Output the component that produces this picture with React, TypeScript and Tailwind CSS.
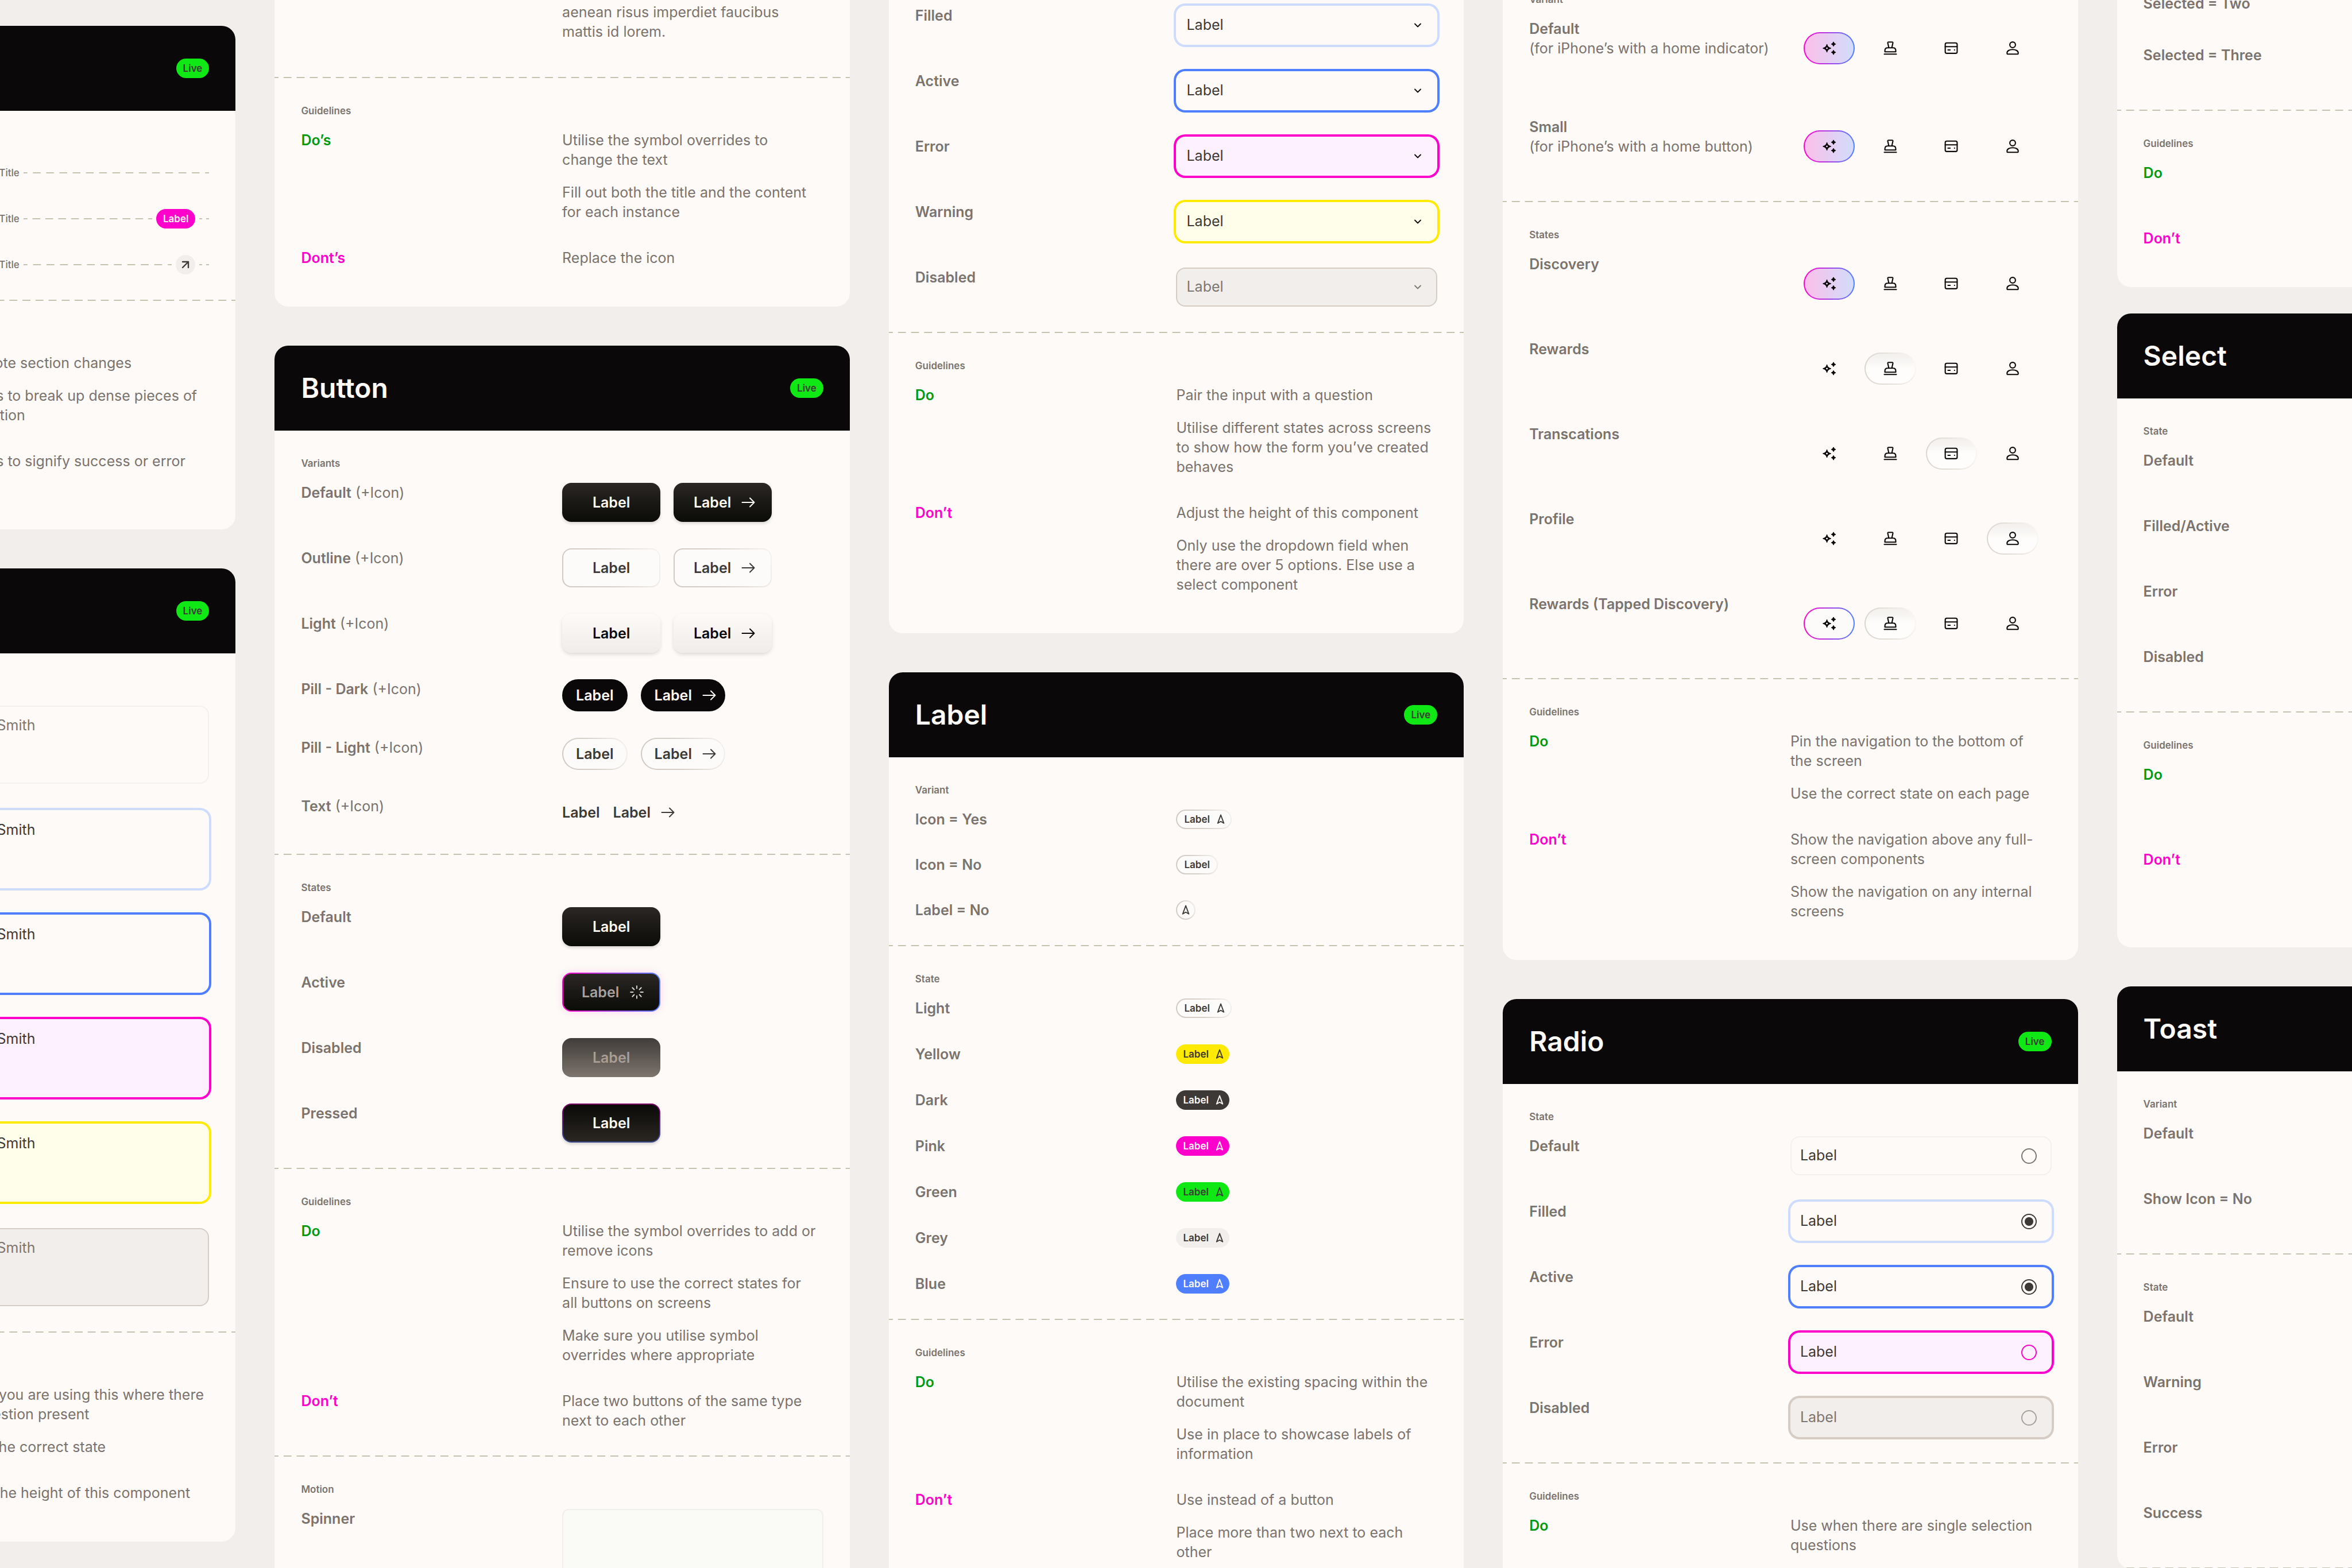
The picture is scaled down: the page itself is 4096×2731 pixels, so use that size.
import React from "react";
import { ArrowUpRight, ChevronDown, Loader, Navigation2 } from "lucide-react";

type Tone = "light" | "yellow" | "dark" | "pink" | "green" | "grey" | "blue";
type FieldState = "default" | "filled" | "active" | "error" | "warning" | "disabled" | "locked";

const outlineBorder =
  "border-2 border-transparent [background:linear-gradient(#fdfbf9,#fdfbf9)_padding-box,linear-gradient(70deg,#cfc9c1_0%,#d6d0c9_45%,#f6f3f0_100%)_border-box]";

const tones: Record<Tone, string> = {
  light: `text-[#3d3936] ${outlineBorder}`,
  yellow: "bg-[#ffea00] text-[#3d3936]",
  dark: "bg-[#3d3936] text-[#fdfaf7]",
  pink: "bg-[#ff00cc] text-[#fdfaf7]",
  green: "bg-[#10e815] text-[#3d3936]",
  grey: "bg-[#f1eeeb] text-[#3d3936]",
  blue: "bg-[#4f7fff] text-[#fdfaf7]",
};

const fields: Record<FieldState, string> = {
  default: "border-2 border-[#f3f0ed] text-[#3d3936]",
  filled: "border-2 border-transparent ring-4 ring-[#cddbff] text-[#3d3936]",
  active: "border-2 border-transparent ring-4 ring-[#4f7fff] text-[#3d3936]",
  error: "border-2 border-transparent bg-[#fef1ff] ring-4 ring-[#ff00cc] text-[#3d3936]",
  warning: "border-2 border-transparent bg-[#fffeea] ring-4 ring-[#ffea00] text-[#3d3936]",
  disabled: "border-2 border-[#d6ccc4] bg-[#f1eeeb] text-[#7e7670]",
  locked: "border-2 border-transparent bg-[#f1eeeb] ring-4 ring-[#d6ccc4] text-[#7e7670]",
};

function Badge({ tone, text, icon }: { tone: Tone; text?: string; icon?: boolean }) {
  return (
    <span
      className={`flex h-[34px] w-fit min-w-[34px] shrink-0 items-center justify-center gap-[10px] rounded-full text-[17px] leading-none font-semibold ${
        text ? (icon ? "pr-[8px] pl-[12px]" : "px-[12px]") : ""
      } ${tones[tone]}`}
    >
      {text}
      {icon && <Navigation2 size={18} strokeWidth={2.6} aria-hidden="true" />}
    </span>
  );
}

function Dashes({ className = "" }: { className?: string }) {
  return (
    <div
      className={`h-[2px] bg-[linear-gradient(90deg,#c6c2b0_31%,transparent_31%_69%,#c6c2b0_69%)] bg-[length:23px_2px] [background-repeat:round_no-repeat] ${className}`}
    />
  );
}

function Column({ className = "", children }: { className?: string; children: React.ReactNode }) {
  return <div className={`flex min-w-0 flex-col gap-[68px] ${className}`}>{children}</div>;
}

function Card({ title, className = "", children }: { title?: string; className?: string; children: React.ReactNode }) {
  return (
    <article className={`overflow-hidden rounded-3xl bg-[#fdfaf7] ${className}`}>
      {title && (
        <header className="flex h-[148px] items-center justify-between bg-[#0b0809] px-[46px]">
          <h2 className="text-[48px] leading-none font-semibold text-[#fdfaf7]">{title}</h2>
          <Badge tone="green" text="Live" />
        </header>
      )}
      {children}
    </article>
  );
}

function Section({
  label,
  last,
  gap = "gap-[46px]",
  pad = "pb-[44px]",
  children,
}: {
  label: string;
  last?: boolean;
  gap?: string;
  pad?: string;
  children: React.ReactNode;
}) {
  return (
    <section>
      <div className={`px-[46px] pt-[46px] ${last ? "pb-[68px]" : pad}`}>
        <h3 className="mb-[23px] text-[17px] leading-[22px] font-semibold">{label}</h3>
        <div className={`flex flex-col ${gap}`}>{children}</div>
      </div>
      {!last && <Dashes />}
    </section>
  );
}

function Row({
  name,
  note,
  height = "",
  children,
}: {
  name: React.ReactNode;
  note?: string;
  height?: string;
  children?: React.ReactNode;
}) {
  return (
    <div className={`grid grid-cols-2 items-start ${height}`}>
      <div className="leading-[34px] font-semibold whitespace-nowrap">
        {name}
        {note && <span className="font-normal">{note}</span>}
      </div>
      <div className="min-w-0">{children}</div>
    </div>
  );
}

function Advice({ kind, name, items }: { kind: "do" | "dont"; name: string; items: string[] }) {
  return (
    <Row name={<span className={kind === "do" ? "text-[#009a10]" : "text-[#ff00cc]"}>{name}</span>}>
      <div className="flex flex-col gap-[23px]">
        {items.map((text) => (
          <p key={text} className="leading-[34px] whitespace-pre">
            {text}
          </p>
        ))}
      </div>
    </Row>
  );
}

function Arrow() {
  return (
    <svg viewBox="0 0 24 18" className="h-[18px] w-[24px]" fill="none" stroke="currentColor" strokeWidth="2" strokeLinecap="round" strokeLinejoin="round" aria-hidden="true">
      <path d="M1.5 9H22.5M15 1.5 22.5 9 15 16.5" />
    </svg>
  );
}

const boxButton =
  "flex h-[68px] w-[171px] items-center justify-center gap-[18px] rounded-2xl leading-none font-semibold";
const pillButton = "flex h-14 items-center gap-[18px] rounded-full leading-none font-semibold";

const buttonLooks = {
  dark: `${boxButton} bg-linear-to-b from-[#2b2724] to-[#0b0b08] text-[#fdfaf7] shadow-[0_3px_5px_rgba(0,0,0,0.14)]`,
  outline: `${boxButton} ${outlineBorder} text-[#3d3936]`,
  light: `${boxButton} bg-linear-to-b from-[#fdfaf7] to-[#efecea] text-[#0b0809] shadow-[0_3px_6px_rgba(0,0,0,0.13)]`,
  pillDark: `${pillButton} border-2 border-[#0b0809] bg-[#0b0809] text-[#fdfaf7]`,
  pillLight: `${pillButton} ${outlineBorder} text-[#3d3936]`,
  text: "flex h-14 items-center gap-[18px] leading-none font-semibold text-[#3d3936]",
};

function ButtonPair({ look }: { look: keyof typeof buttonLooks }) {
  const pill = look === "pillDark" || look === "pillLight";
  const box = look === "dark" || look === "outline" || look === "light";
  return (
    <div className="flex gap-[23px]">
      <button type="button" className={`${buttonLooks[look]} ${pill ? "px-[22px]" : ""}`}>
        Label
      </button>
      <button type="button" className={`${buttonLooks[look]} ${pill ? "pr-[14px] pl-[22px]" : ""} ${box ? "pl-[6px]" : ""}`}>
        Label
        <Arrow />
      </button>
    </div>
  );
}

function Dropdown({ name, state }: { name: string; state: FieldState }) {
  return (
    <div className="relative">
      <select
        aria-label={name}
        disabled={state === "disabled"}
        className={`block h-[68px] w-full appearance-none rounded-2xl px-[16px] opacity-100 ${fields[state]}`}
      >
        <option>Label</option>
      </select>
      <ChevronDown
        size={20}
        strokeWidth={2.2}
        aria-hidden="true"
        className={`pointer-events-none absolute top-[24px] right-[24px] ${state === "disabled" ? "text-[#7e7670]" : "text-[#0b0809]"}`}
      />
    </div>
  );
}

function RadioField({ name, state, checked, ring }: { name: string; state: FieldState; checked?: boolean; ring: string }) {
  return (
    <label className={`flex h-[68px] items-center justify-between rounded-2xl pr-[24px] pl-[15px] ${fields[state]}`}>
      Label
      <input
        type="radio"
        name={`radio-${name}`}
        defaultChecked={checked}
        disabled={state === "locked"}
        className={`size-[27px] appearance-none rounded-full border-2 checked:bg-[radial-gradient(circle,#3d3936_7px,transparent_8px)] ${ring}`}
      />
    </label>
  );
}

function TextArea({ name, state, muted }: { name: string; state: FieldState; muted?: boolean }) {
  return (
    <textarea
      aria-label={name}
      defaultValue="Anna Smith"
      disabled={state === "disabled"}
      className={`block h-[136px] w-full resize-none rounded-2xl px-[15px] py-[15px] leading-[34px] ${fields[state]} ${muted ? "text-[#7e7670]!" : ""}`}
    />
  );
}

const icons = {
  Discovery: (
    <g fill="currentColor" strokeWidth="1.1">
      <path
        fillRule="evenodd"
        d="M8.2 6.3Q9.2 11 13.9 12Q9.2 13 8.2 17.7Q7.2 13 2.5 12Q7.2 11 8.2 6.3ZM8.2 10.1A1.9 1.9 0 1 0 8.2 13.9A1.9 1.9 0 1 0 8.2 10.1Z"
      />
      <path d="M18 2.8Q18.6 5.2 21 5.8Q18.6 6.4 18 8.8Q17.4 6.4 15 5.8Q17.4 5.2 18 2.8Z" />
      <path d="M18 15.2Q18.6 17.6 21 18.2Q18.6 18.8 18 21.2Q17.4 18.8 15 18.2Q17.4 17.6 18 15.2Z" />
    </g>
  ),
  Rewards: (
    <path d="M9.8 11.4 8.2 4.2Q8 2.8 9.3 2.8H14.7Q16 2.8 15.8 4.2L14.2 11.4M3.9 17.3V15.6Q3.9 11.4 8 11.4H16Q20.1 11.4 20.1 15.6V17.3ZM3 20.8H21" />
  ),
  Transactions: (
    <>
      <rect x="3.1" y="4.1" width="17.8" height="15.5" rx="2.3" />
      <path d="M3.1 9.6H20.9M7.2 14.6H10.4M16.9 14.6H17.1" />
    </>
  ),
  Profile: (
    <>
      <circle cx="12" cy="6.9" r="4.2" />
      <path d="M3.7 18.6C3.7 15.9 7.7 13.9 12 13.9S20.3 15.9 20.3 18.6V19.4C20.3 20.3 19.7 20.8 18.9 20.8H5.1C4.3 20.8 3.7 20.3 3.7 19.4Z" />
    </>
  ),
};

type TabName = keyof typeof icons;

const tabLooks = {
  none: "border-transparent",
  glow: "border-transparent [background:linear-gradient(90deg,#fabfe9,#d2dcfb)_padding-box,linear-gradient(90deg,#ff00cc,#4f7fff)_border-box]",
  ring: "border-transparent [background:linear-gradient(#fdfbf9,#fdfbf9)_padding-box,linear-gradient(90deg,#ff00cc,#4f7fff)_border-box]",
  soft: "border-transparent [background:linear-gradient(#f2efec,#fefdfb_50%)_padding-box,linear-gradient(75deg,#d9d5cd_0%,#e2dfd8_45%,#fdfaf7_100%)_border-box]",
};

function TabBar({ looks }: { looks: Partial<Record<TabName, keyof typeof tabLooks>> }) {
  return (
    <nav className="flex gap-[17px] px-[23px] pt-[23px]">
      {(Object.keys(icons) as TabName[]).map((tab) => (
        <button
          key={tab}
          type="button"
          aria-label={tab}
          className={`flex h-14 flex-1 items-center justify-center rounded-full border-2 text-[#0b0809] ${tabLooks[looks[tab] ?? "none"]}`}
        >
          <svg viewBox="0 0 24 24" className="size-[28px]" fill="none" stroke="currentColor" strokeWidth="1.8" strokeLinecap="round" strokeLinejoin="round" aria-hidden="true">
            {icons[tab]}
          </svg>
        </button>
      ))}
    </nav>
  );
}

function TitledRule({ children }: { children?: React.ReactNode }) {
  return (
    <div className="flex h-[34px] items-center gap-[7px]">
      <span className="text-[17px] leading-none font-medium whitespace-nowrap">Paragraph Title</span>
      <Dashes className="flex-1" />
      {children && (
        <>
          {children}
          <Dashes className="w-[17px]" />
        </>
      )}
    </div>
  );
}

export default function App() {
  return (
    <main className="h-screen overflow-hidden bg-[#f1eeeb] font-['Inter','Liberation_Sans',sans-serif] text-[25px] text-[#7a736e]">
      <div className="-mr-[592px] -ml-[591px] grid grid-cols-5 gap-[68px]">
        <Column className="pt-[45px]">
          <Card title="Divider">
            <Section label="Variant">
              <Row name="Default">
                <TitledRule />
              </Row>
              <Row name="Label">
                <TitledRule>
                  <Badge tone="pink" text="Label" />
                </TitledRule>
              </Row>
              <Row name="Icon">
                <TitledRule>
                  <span className="flex size-[34px] items-center justify-center rounded-full bg-[#f1eeeb] text-[#3d3936]">
                    <ArrowUpRight size={24} strokeWidth={2.4} aria-hidden="true" />
                  </span>
                </TitledRule>
              </Row>
            </Section>
            <Section label="Guidelines" last>
              <Advice kind="do" name="Do" items={["To denote section changes", "Dividers to break up dense pieces of\ninformation"]} />
              <Advice kind="dont" name="Don’t" items={["Dividers to signify success or error\nstates"]} />
            </Section>
          </Card>
          <Card title="Text Area">
            <Section label="State">
              <Row name="Default">
                <TextArea name="Default" state="default" muted />
              </Row>
              <Row name="Filled">
                <TextArea name="Filled" state="filled" />
              </Row>
              <Row name="Active">
                <TextArea name="Active" state="active" />
              </Row>
              <Row name="Error">
                <TextArea name="Error" state="error" />
              </Row>
              <Row name="Warning">
                <TextArea name="Warning" state="warning" />
              </Row>
              <Row name="Disabled">
                <TextArea name="Disabled" state="disabled" />
              </Row>
            </Section>
            <Section label="Guidelines" last>
              <Advice kind="do" name="Do" items={["Ensure you are using this where there\nis a question present", "Utilise the correct state"]} />
              <Advice kind="dont" name="Don’t" items={["Adjust the height of this component"]} />
            </Section>
          </Card>
        </Column>

        <Column className="-mt-[155px]">
          <Card>
            <Section label="Content" pad="pb-[62px]">
              <Row name="Text">
                <p className="leading-[34px] whitespace-pre">
                  {"Lorem ipsum dolor sit amet\nconsectetur at urna id est nunc\naenean risus imperdiet faucibus\nmattis id lorem."}
                </p>
              </Row>
            </Section>
            <Section label="Guidelines" last>
              <Advice
                kind="do"
                name="Do’s"
                items={["Utilise the symbol overrides to\nchange the text", "Fill out both the title and the content\nfor each instance"]}
              />
              <Advice kind="dont" name="Dont’s" items={["Replace the icon"]} />
            </Section>
          </Card>
          <Card title="Button">
            <Section label="Variants">
              <Row name="Default" note=" (+Icon)">
                <ButtonPair look="dark" />
              </Row>
              <Row name="Outline" note=" (+Icon)">
                <ButtonPair look="outline" />
              </Row>
              <Row name="Light" note=" (+Icon)">
                <ButtonPair look="light" />
              </Row>
              <Row name="Pill - Dark" note=" (+Icon)">
                <ButtonPair look="pillDark" />
              </Row>
              <Row name="Pill - Light" note=" (+Icon)">
                <ButtonPair look="pillLight" />
              </Row>
              <Row name="Text" note=" (+Icon)">
                <ButtonPair look="text" />
              </Row>
            </Section>
            <Section label="States">
              <Row name="Default">
                <button type="button" className={buttonLooks.dark}>
                  Label
                </button>
              </Row>
              <Row name="Active">
                <button
                  type="button"
                  className={`${boxButton} border-2 border-transparent pl-[6px] text-[#a8a19b] shadow-[0_0_14px_rgba(255,0,204,0.16)] [background:linear-gradient(#2b2724,#0b0b08)_padding-box,linear-gradient(90deg,#ff00cc,#4f7fff)_border-box]`}
                >
                  Label
                  <Loader size={26} strokeWidth={1.8} aria-hidden="true" className="text-[#ddd8d3]" />
                </button>
              </Row>
              <Row name="Disabled">
                <button type="button" disabled className={`${boxButton} bg-linear-to-b from-[#413d3a] to-[#7e756e] text-[#a89e97]`}>
                  Label
                </button>
              </Row>
              <Row name="Pressed">
                <button
                  type="button"
                  className={`${boxButton} border-2 border-transparent text-[#fdfaf7] shadow-[0_3px_5px_rgba(0,0,0,0.16)] [background:linear-gradient(#0a0a08,#2a2622)_padding-box,linear-gradient(#7a0060,#38498c)_border-box]`}
                >
                  Label
                </button>
              </Row>
            </Section>
            <Section label="Guidelines">
              <Advice
                kind="do"
                name="Do"
                items={[
                  "Utilise the symbol overrides to add or\nremove icons",
                  "Ensure to use the correct states for\nall buttons on screens",
                  "Make sure you utilise symbol\noverrides where appropriate",
                ]}
              />
              <Advice kind="dont" name="Don’t" items={["Place two buttons of the same type\nnext to each other"]} />
            </Section>
            <Section label="Motion" last>
              <Row name="Spinner">
                <div className="h-[160px] rounded-xl border-2 border-[#f0efeb] bg-[#fafbf7]" />
              </Row>
            </Section>
          </Card>
        </Column>

        <Column className="-mt-[195px]">
          <Card>
            <Section label="State">
              <Row name="Default">
                <Dropdown name="Default" state="default" />
              </Row>
              <Row name="Filled">
                <Dropdown name="Filled" state="filled" />
              </Row>
              <Row name="Active">
                <Dropdown name="Active" state="active" />
              </Row>
              <Row name="Error">
                <Dropdown name="Error" state="error" />
              </Row>
              <Row name="Warning">
                <Dropdown name="Warning" state="warning" />
              </Row>
              <Row name="Disabled">
                <Dropdown name="Disabled" state="disabled" />
              </Row>
            </Section>
            <Section label="Guidelines" last>
              <Advice
                kind="do"
                name="Do"
                items={[
                  "Pair the input with a question",
                  "Utilise different states across screens\nto show how the form you’ve created\nbehaves",
                ]}
              />
              <Advice
                kind="dont"
                name="Don’t"
                items={[
                  "Adjust the height of this component",
                  "Only use the dropdown field when\nthere are over 5 options. Else use a\nselect component",
                ]}
              />
            </Section>
          </Card>
          <Card title="Label">
            <Section label="Variant" gap="gap-[45px]">
              <Row name="Icon = Yes" height="h-[34px]">
                <Badge tone="light" text="Label" icon />
              </Row>
              <Row name="Icon = No" height="h-[34px]">
                <Badge tone="light" text="Label" />
              </Row>
              <Row name="Label = No" height="h-[34px]">
                <Badge tone="light" icon />
              </Row>
            </Section>
            <Section label="State">
              <Row name="Light" height="h-[34px]">
                <Badge tone="light" text="Label" icon />
              </Row>
              <Row name="Yellow" height="h-[34px]">
                <Badge tone="yellow" text="Label" icon />
              </Row>
              <Row name="Dark" height="h-[34px]">
                <Badge tone="dark" text="Label" icon />
              </Row>
              <Row name="Pink" height="h-[34px]">
                <Badge tone="pink" text="Label" icon />
              </Row>
              <Row name="Green" height="h-[34px]">
                <Badge tone="green" text="Label" icon />
              </Row>
              <Row name="Grey" height="h-[34px]">
                <Badge tone="grey" text="Label" icon />
              </Row>
              <Row name="Blue" height="h-[34px]">
                <Badge tone="blue" text="Label" icon />
              </Row>
            </Section>
            <Section label="Guidelines" last>
              <Advice
                kind="do"
                name="Do"
                items={["Utilise the existing spacing within the\ndocument", "Use in place to showcase labels of\ninformation"]}
              />
              <Advice kind="dont" name="Don’t" items={["Use instead of a button", "Place more than two next to each\nother"]} />
            </Section>
          </Card>
        </Column>

        <Column className="-mt-[58px]">
          <Card>
            <Section label="Variant">
              <Row
                height="h-[125px]"
                name={
                  <>
                    Default
                    <br />
                    <span className="font-normal">(for iPhone’s with a home indicator)</span>
                  </>
                }
              >
                <TabBar looks={{ Discovery: "glow" }} />
              </Row>
              <Row
                height="h-[102px]"
                name={
                  <>
                    Small
                    <br />
                    <span className="font-normal">(for iPhone’s with a home button)</span>
                  </>
                }
              >
                <TabBar looks={{ Discovery: "glow" }} />
              </Row>
            </Section>
            <Section label="States">
              <Row name="Discovery" height="h-[102px]">
                <TabBar looks={{ Discovery: "glow" }} />
              </Row>
              <Row name="Rewards" height="h-[102px]">
                <TabBar looks={{ Rewards: "soft" }} />
              </Row>
              <Row name="Transcations" height="h-[102px]">
                <TabBar looks={{ Transactions: "soft" }} />
              </Row>
              <Row name="Profile" height="h-[102px]">
                <TabBar looks={{ Profile: "soft" }} />
              </Row>
              <Row name="Rewards (Tapped Discovery)" height="h-[102px]">
                <TabBar looks={{ Discovery: "ring", Rewards: "soft" }} />
              </Row>
            </Section>
            <Section label="Guidelines" last>
              <Advice
                kind="do"
                name="Do"
                items={["Pin the navigation to the bottom of\nthe screen", "Use the correct state on each page"]}
              />
              <Advice
                kind="dont"
                name="Don’t"
                items={[
                  "Show the navigation above any full-\nscreen components",
                  "Show the navigation on any internal\nscreens",
                ]}
              />
            </Section>
          </Card>
          <Card title="Radio">
            <Section label="State">
              <Row name="Default">
                <RadioField name="default" state="default" ring="border-[#7e7670]" />
              </Row>
              <Row name="Filled">
                <RadioField name="filled" state="filled" checked ring="border-[#3d3936]" />
              </Row>
              <Row name="Active">
                <RadioField name="active" state="active" checked ring="border-[#3d3936]" />
              </Row>
              <Row name="Error">
                <RadioField name="error" state="error" ring="border-[#ff00cc]" />
              </Row>
              <Row name="Disabled">
                <RadioField name="disabled" state="locked" ring="border-[#a8a19b]" />
              </Row>
            </Section>
            <Section label="Guidelines" last>
              <Advice kind="do" name="Do" items={["Use when there are single selection\nquestions"]} />
            </Section>
          </Card>
        </Column>

        <Column className="-mt-[102px]">
          <Card>
            <Section label="Variant">
              <Row name="Selected = Two" height="h-[44px]" />
              <Row name="Selected = Three" height="h-[68px]" />
            </Section>
            <Section label="Guidelines" last>
              <Advice kind="do" name="Do" items={["Use to switch between\nviews"]} />
              <Advice kind="dont" name="Don’t" items={["Use as navigation"]} />
            </Section>
          </Card>
          <Card title="Select" className="-mt-[22px]">
            <Section label="State">
              <Row name="Default" height="h-[68px]" />
              <Row name="Filled/Active" height="h-[68px]" />
              <Row name="Error" height="h-[68px]" />
              <Row name="Disabled" height="h-[68px]" />
            </Section>
            <Section label="Guidelines" last>
              <Advice kind="do" name="Do" items={["Use when there are\nfewer than five\noptions"]} />
              <Advice kind="dont" name="Don’t" items={["Adjust the height\nof this\ncomponent"]} />
            </Section>
          </Card>
          <Card title="Toast">
            <Section label="Variant">
              <Row name="Default" height="h-[68px]" />
              <Row name="Show Icon = No" height="h-[68px]" />
            </Section>
            <Section label="State">
              <Row name="Default" height="h-[68px]" />
              <Row name="Warning" height="h-[68px]" />
              <Row name="Error" height="h-[68px]" />
              <Row name="Success" height="h-[68px]" />
            </Section>
          </Card>
        </Column>
      </div>
    </main>
  );
}
